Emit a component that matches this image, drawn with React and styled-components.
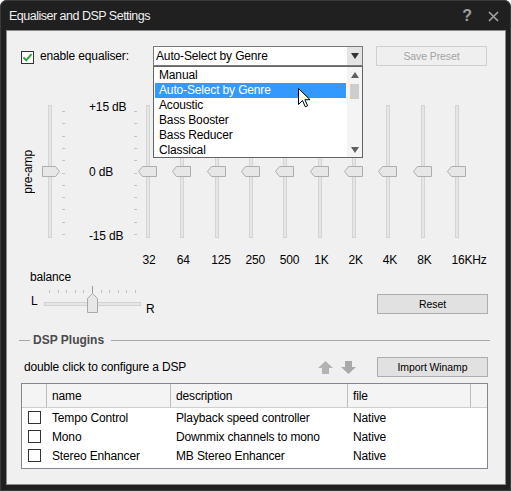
import React from 'react';
import styled, { createGlobalStyle } from 'styled-components';

const Global = createGlobalStyle`
  html, body { margin: 0; padding: 0; background: #ffffff; }
  body {
    font-family: "Liberation Sans", Arial, sans-serif;
    font-size: 12px;
    color: #000;
    letter-spacing: -0.15px;
  }
  * { box-sizing: border-box; }
`;

const Window = styled.div`
  width: 511px;
  height: 491px;
  background: #202020;
  border-radius: 7px 7px 0 0;
  box-shadow: inset 0 0 0 1px #3a3a3a;
  display: flex;
  flex-direction: column;
  padding: 0 5px 6px 6px;
  overflow: hidden;
`;

const TitleBar = styled.div`
  height: 30px;
  flex: none;
  display: flex;
  align-items: center;
  padding: 2px 0 0 3px;
`;

const TitleText = styled.div`
  flex: 1;
  color: #f0f0f0;
  font-size: 12.5px;
  letter-spacing: -0.5px;
`;

const TitleButton = styled.div`
  width: 26px;
  height: 26px;
  display: flex;
  align-items: center;
  justify-content: center;
  color: #a0a0a0;
  font-size: 16px;
  font-weight: bold;
  font-family: "Liberation Sans", Arial, sans-serif;
`;

const Panel = styled.div`
  flex: 1;
  background: #f0f0f0;
  border: 1px solid #8a8a8a;
  padding: 15px 17px 0 14px;
  display: flex;
  flex-direction: column;
`;

const Row = styled.div`
  display: flex;
  align-items: center;
  height: 20px;
  flex: none;
  margin-top: ${p => p.$mt || 0}px;
`;

const CheckBox = styled.div`
  width: 13px;
  height: 13px;
  flex: none;
  border: 1px solid #333;
  background: #fff;
  display: flex;
  align-items: center;
  justify-content: center;
  margin-top: ${p => p.$mt || 0}px;
`;

const Label = styled.div`
  flex: none;
  width: ${p => (p.$w ? `${p.$w}px` : 'auto')};
  margin-left: ${p => p.$ml || 0}px;
  line-height: 14px;
  white-space: nowrap;
`;

const Combo = styled.div`
  position: relative;
  width: 210px;
  height: 20px;
  flex: none;
  background: #fff;
  border: 1px solid #7a7a7a;
  display: flex;
`;

const ComboText = styled.div`
  flex: 1;
  padding-left: 2px;
  line-height: 18px;
`;

const ComboArrow = styled.div`
  width: 15px;
  background: #e4e4e4;
  display: flex;
  align-items: center;
  justify-content: center;
`;

const Dropdown = styled.div`
  position: absolute;
  top: 19px;
  left: -1px;
  width: 210px;
  height: 92px;
  background: #fff;
  border: 1px solid #646464;
  display: flex;
  z-index: 10;
`;

const ListItems = styled.div`
  flex: 1;
  display: flex;
  flex-direction: column;
  padding-top: 1px;
`;

const ListItem = styled.div`
  height: 15px;
  line-height: 15px;
  padding-left: 4px;
  margin: 0 1px;
  background: ${p => (p.$sel ? '#3399ff' : 'transparent')};
  color: ${p => (p.$sel ? '#fff' : '#000')};
  white-space: nowrap;
`;

const ScrollBar = styled.div`
  width: 15px;
  background: #f4f4f4;
  display: flex;
  flex-direction: column;
  align-items: center;
`;

const ScrollBtn = styled.div`
  height: 15px;
  width: 15px;
  display: flex;
  align-items: center;
  justify-content: center;
`;

const ScrollThumb = styled.div`
  width: 9px;
  height: 15px;
  margin-top: 2px;
  background: #cdcdcd;
`;

const ScrollSpace = styled.div`
  flex: 1;
`;

const Cursor = styled.svg`
  position: absolute;
  left: 144px;
  top: 21px;
`;

const Button = styled.div`
  width: 111px;
  height: 20px;
  flex: none;
  display: flex;
  align-items: center;
  justify-content: center;
  font-size: 10.5px;
  letter-spacing: -0.1px;
  background: ${p => (p.$disabled ? '#efefef' : '#e1e1e1')};
  border: 1px solid ${p => (p.$disabled ? '#cfcfcf' : '#adadad')};
  color: ${p => (p.$disabled ? '#a3a3a3' : '#000')};
  margin-left: ${p => (p.$auto ? 'auto' : `${p.$ml || 0}px`)};
  margin-bottom: ${p => p.$mb || 0}px;
`;

const EqRow = styled.div`
  display: flex;
  align-items: flex-start;
  margin-top: 34px;
  flex: none;
`;

const PreampLabel = styled.div`
  width: 14px;
  height: 143px;
  flex: none;
  display: flex;
  align-items: center;
  justify-content: center;
  span {
    writing-mode: vertical-rl;
    transform: rotate(180deg);
    white-space: nowrap;
    line-height: 14px;
  }
`;

const SliderBox = styled.div`
  flex: none;
  width: 20px;
  height: 143px;
  margin-left: ${p => p.$ml || 0}px;
`;

const TickCol = styled.svg`
  flex: none;
  margin-left: ${p => p.$ml || 0}px;
`;

const DbCol = styled.div`
  flex: none;
  width: 68px;
  height: 143px;
  padding-left: 23px;
  display: flex;
  flex-direction: column;
  justify-content: space-between;
  line-height: 14px;
  white-space: nowrap;
`;

const Band = styled.div`
  flex: none;
  width: 34.33px;
  display: flex;
  flex-direction: column;
`;

const BandLabel = styled.div`
  margin-top: 10px;
  padding-left: 4.5px;
  line-height: 14px;
  white-space: nowrap;
`;

const BalanceRow = styled.div`
  display: flex;
  align-items: flex-end;
  margin-top: 3px;
  flex: none;
`;

const BalanceBlock = styled.div`
  display: flex;
  flex-direction: column;
`;

const BalanceCtl = styled.div`
  display: flex;
  align-items: flex-start;
  margin-top: 1px;
  height: 28px;
`;

const SideLetter = styled.div`
  width: ${p => p.$w || 'auto'};
  margin-left: ${p => p.$ml || 0}px;
  margin-top: ${p => p.$mt || 0}px;
  line-height: 14px;
`;

const GroupHeader = styled.div`
  display: flex;
  align-items: center;
  height: 14px;
  margin: 20px -2px 0 -2px;
  flex: none;
`;

const GroupLine = styled.div`
  height: 1px;
  background: #a6a6a6;
  width: ${p => (p.$w ? `${p.$w}px` : 'auto')};
  flex: ${p => (p.$w ? 'none' : '1')};
  margin-left: ${p => p.$ml || 0}px;
`;

const GroupTitle = styled.div`
  font-weight: bold;
  color: #4a4a4a;
  margin-left: 3px;
  line-height: 14px;
  letter-spacing: 0;
`;

const ArrowGroup = styled.div`
  margin-left: auto;
  display: flex;
  align-items: center;
  gap: 8px;
`;

const Table = styled.div`
  margin-top: 6px;
  height: 86px;
  flex: none;
  background: #fff;
  border: 1px solid #828790;
  display: flex;
  flex-direction: column;
`;

const cols = '25px 124px 177px 123px 1fr';

const HeaderRow = styled.div`
  display: grid;
  grid-template-columns: ${cols};
  height: 24px;
  background: #f4f4f4;
  border-bottom: 1px solid #cfcfcf;
`;

const HeaderCell = styled.div`
  border-right: ${p => (p.$last ? 'none' : '1px solid #bdbdbd')};
  padding-left: 5px;
  display: flex;
  align-items: center;
`;

const BodyRow = styled.div`
  display: grid;
  grid-template-columns: ${cols};
  height: 19px;
  align-items: center;
`;

const Cell = styled.div`
  padding-left: ${p => (p.$center ? 0 : 5)}px;
  display: flex;
  justify-content: ${p => (p.$center ? 'center' : 'flex-start')};
  white-space: nowrap;
`;

/* ---------- drawings ---------- */

const Check = () => (
  <svg width="11" height="11" viewBox="0 0 11 11">
    <path d="M1.5 5.5 L4.2 8.3 L9.5 2.2" fill="none" stroke="#2e9e38" strokeWidth="1.9" />
  </svg>
);

const Tri = ({ dir = 'down', color = '#222', w = 8, h = 5 }) => (
  <svg width={w} height={h} viewBox={`0 0 ${w} ${h}`}>
    {dir === 'down' ? (
      <polygon points={`0,0 ${w},0 ${w / 2},${h}`} fill={color} />
    ) : (
      <polygon points={`0,${h} ${w},${h} ${w / 2},0`} fill={color} />
    )}
  </svg>
);

const VSlider = ({ dir, ml }) => (
  <SliderBox $ml={ml}>
    <svg width="20" height="143" viewBox="0 0 20 143">
      <rect x="8.5" y="5.5" width="3" height="132" fill="#e6e6e6" stroke="#d4d4d4" />
      {dir === 'left' ? (
        <polygon
          points="0.5,71.5 4.5,66.5 18.5,66.5 18.5,76.5 4.5,76.5"
          fill="#e7e7e7"
          stroke="#adadad"
        />
      ) : (
        <polygon
          points="2.5,66.5 15.5,66.5 19.5,71.5 15.5,76.5 2.5,76.5"
          fill="#e7e7e7"
          stroke="#adadad"
        />
      )}
    </svg>
  </SliderBox>
);

const Ticks = ({ ml }) => (
  <TickCol $ml={ml} width="4" height="143" viewBox="0 0 4 143">
    {Array.from({ length: 11 }).map((_, i) => (
      <rect key={i} x="0" y={Math.round(11 + i * 12.3)} width="3" height="1" fill="#c4c4c4" />
    ))}
  </TickCol>
);

const BalanceSlider = () => (
  <svg width="104" height="28" viewBox="0 0 104 28">
    {Array.from({ length: 11 }).map((_, i) =>
      i === 5 ? (
        <rect key={i} x={Math.round(9 + i * 8.6)} y="1" width="1" height="7" fill="#9a9a9a" />
      ) : (
        <rect key={i} x={Math.round(9 + i * 8.6)} y="5" width="1" height="3" fill="#c0c0c0" />
      )
    )}
    <rect x="4.5" y="17.5" width="96" height="3" fill="#e6e6e6" stroke="#d2d2d2" />
    <polygon
      points="47.5,27.5 47.5,13.5 52.5,8.5 57.5,13.5 57.5,27.5"
      fill="#e7e7e7"
      stroke="#a9a9a9"
    />
  </svg>
);

const BlockArrow = ({ up, color }) => (
  <svg width="15" height="13" viewBox="0 0 15 13">
    {up ? (
      <polygon points="7.5,0 15,7 11,7 11,13 4,13 4,7 0,7" fill={color} />
    ) : (
      <polygon points="4,0 11,0 11,6 15,6 7.5,13 0,6 4,6" fill={color} />
    )}
  </svg>
);

/* ---------- data ---------- */

const presets = ['Manual', 'Auto-Select by Genre', 'Acoustic', 'Bass Booster', 'Bass Reducer', 'Classical'];
const bands = ['32', '64', '125', '250', '500', '1K', '2K', '4K', '8K', '16KHz'];
const plugins = [
  ['Tempo Control', 'Playback speed controller', 'Native'],
  ['Mono', 'Downmix channels to mono', 'Native'],
  ['Stereo Enhancer', 'MB Stereo Enhancer', 'Native'],
];

export default function App() {
  return (
    <>
      <Global />
      <Window>
        <TitleBar>
          <TitleText>Equaliser and DSP Settings</TitleText>
          <TitleButton>?</TitleButton>
          <TitleButton>
            <svg width="11" height="11" viewBox="0 0 11 11">
              <path d="M1 1 L10 10 M10 1 L1 10" stroke="#a0a0a0" strokeWidth="1.7" />
            </svg>
          </TitleButton>
        </TitleBar>
        <Panel>
          <Row>
            <CheckBox $mt={2}>
              <Check />
            </CheckBox>
            <Label $w={113} $ml={6}>enable equaliser:</Label>
            <Combo>
              <ComboText>Auto-Select by Genre</ComboText>
              <ComboArrow>
                <Tri dir="down" color="#333" w={8} h={6} />
              </ComboArrow>
              <Dropdown>
                <ListItems>
                  {presets.map((p, i) => (
                    <ListItem key={p} $sel={i === 1}>
                      {p}
                    </ListItem>
                  ))}
                </ListItems>
                <ScrollBar>
                  <ScrollBtn>
                    <Tri dir="up" color="#606060" w={8} h={6} />
                  </ScrollBtn>
                  <ScrollThumb />
                  <ScrollSpace />
                  <ScrollBtn>
                    <Tri dir="down" color="#606060" w={8} h={6} />
                  </ScrollBtn>
                </ScrollBar>
                <Cursor width="13" height="20" viewBox="0 0 13 20">
                  <path
                    d="M0.5 0.5 L0.5 16.5 L4.5 12.5 L7.3 18.8 L9.6 17.8 L6.9 11.7 L12 11.7 Z"
                    fill="#fff"
                    stroke="#000"
                    strokeWidth="1"
                    strokeLinejoin="round"
                  />
                </Cursor>
              </Dropdown>
            </Combo>
            <Button $disabled $ml={13}>Save Preset</Button>
          </Row>

          <EqRow>
            <PreampLabel>
              <span>pre-amp</span>
            </PreampLabel>
            <VSlider dir="right" ml={5} />
            <Ticks ml={2} />
            <DbCol>
              <div>+15 dB</div>
              <div>0 dB</div>
              <div>-15 dB</div>
            </DbCol>
            <Ticks ml={0} />
            {bands.map(b => (
              <Band key={b}>
                <VSlider dir="left" />
                <BandLabel>{b}</BandLabel>
              </Band>
            ))}
          </EqRow>

          <BalanceRow>
            <BalanceBlock>
              <Label $ml={9}>balance</Label>
              <BalanceCtl>
                <SideLetter $w="9px" $ml={10} $mt={9}>L</SideLetter>
                <BalanceSlider />
                <SideLetter $ml={2} $mt={17}>R</SideLetter>
              </BalanceCtl>
            </BalanceBlock>
            <Button $auto $mb={-1}>Reset</Button>
          </BalanceRow>

          <GroupHeader>
            <GroupLine $w={11} />
            <GroupTitle>DSP Plugins</GroupTitle>
            <GroupLine $ml={7} />
          </GroupHeader>

          <Row $mt={10}>
            <Label $ml={3}>double click to configure a DSP</Label>
            <ArrowGroup>
              <BlockArrow up color="#b3b3b3" />
              <BlockArrow color="#a9a9a9" />
            </ArrowGroup>
            <Button $ml={21}>Import Winamp</Button>
          </Row>

          <Table>
            <HeaderRow>
              <HeaderCell />
              <HeaderCell>name</HeaderCell>
              <HeaderCell>description</HeaderCell>
              <HeaderCell>file</HeaderCell>
              <HeaderCell $last />
            </HeaderRow>
            {plugins.map(([n, d, f]) => (
              <BodyRow key={n}>
                <Cell $center>
                  <CheckBox />
                </Cell>
                <Cell>{n}</Cell>
                <Cell>{d}</Cell>
                <Cell>{f}</Cell>
                <Cell />
              </BodyRow>
            ))}
          </Table>
        </Panel>
      </Window>
    </>
  );
}
